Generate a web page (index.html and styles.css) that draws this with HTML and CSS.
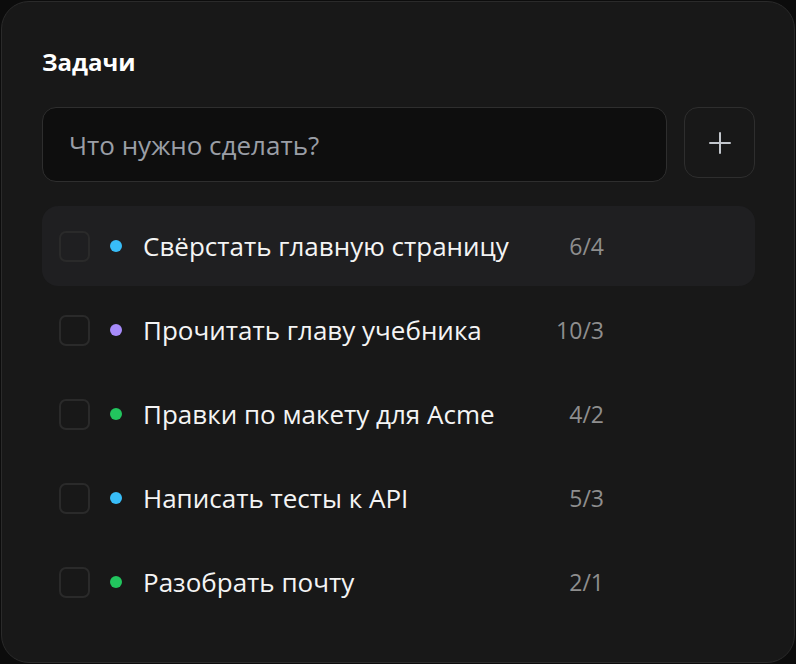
FILE: index.html
```html
<!DOCTYPE html>
<html lang="ru">
<head>
	<meta charset="UTF-8">
	<title>Задачи</title>
	<link rel="stylesheet" href="styles.css">
</head>
<body>
	<div class="card">
		<h2 class="title">Задачи</h2>
		<div class="add-row">
			<input class="task-input" type="text" placeholder="Что нужно сделать?">
			<button class="add-btn" type="button">
				<svg width="24" height="24" viewBox="0 0 24 24" fill="none" stroke="currentColor" stroke-width="2" stroke-linecap="round">
					<path d="M12 2v20M2 12h20"/>
				</svg>
			</button>
		</div>
		<ul class="tasks">
			<li class="task active">
				<span class="check"></span>
				<span class="dot blue"></span>
				<span class="name">Свёрстать главную страницу</span>
				<span class="count">6/4</span>
			</li>
			<li class="task">
				<span class="check"></span>
				<span class="dot purple"></span>
				<span class="name">Прочитать главу учебника</span>
				<span class="count">10/3</span>
			</li>
			<li class="task">
				<span class="check"></span>
				<span class="dot green"></span>
				<span class="name">Правки по макету для Acme</span>
				<span class="count">4/2</span>
			</li>
			<li class="task">
				<span class="check"></span>
				<span class="dot blue"></span>
				<span class="name">Написать тесты к API</span>
				<span class="count">5/3</span>
			</li>
			<li class="task">
				<span class="check"></span>
				<span class="dot green"></span>
				<span class="name">Разобрать почту</span>
				<span class="count">2/1</span>
			</li>
		</ul>
	</div>
</body>
</html>
```

FILE: styles.css
```css
*{
	margin: 0;
	padding: 0;
	box-sizing: border-box;
}
body{
	background-color: #0c0c0c;
	padding: 1px;
	font-family: "Open Sans", "Noto Sans", sans-serif;
	color: #f2f2f2;
}
.card{
	height: 662px;
	background-color: #181818;
	border: 1px solid #2a2a2a;
	border-radius: 28px;
	padding: 45px 39px 0 40px;
}
.title{
	font-size: 24px;
	font-weight: 700;
	line-height: 30px;
	color: #fff;
	margin-bottom: 30px;
}
.add-row{
	display: flex;
	gap: 17px;
	align-items: flex-start;
}
.task-input{
	flex: 1;
	height: 75px;
	background-color: #0e0e0e;
	border: 1px solid #2e2e2e;
	border-radius: 14px;
	padding: 0 26px;
	font-family: inherit;
	font-size: 26px;
	color: #eee;
	outline: none;
}
.task-input::placeholder{
	color: #9a9ea6;
}
.add-btn{
	width: 71px;
	height: 71px;
	background-color: #181818;
	border: 1px solid #2e2e2e;
	border-radius: 14px;
	color: #c2c6cc;
	display: flex;
	align-items: center;
	justify-content: center;
}
.tasks{
	list-style: none;
	margin-top: 24px;
	display: flex;
	flex-direction: column;
	gap: 4px;
}
.task{
	height: 80px;
	display: flex;
	align-items: center;
	padding: 0 151px 0 17px;
	border-radius: 16px;
}
.task.active{
	background-color: #1f1f21;
}
.check{
	width: 31px;
	height: 31px;
	border: 2px solid #2a2a2a;
	border-radius: 7px;
	flex-shrink: 0;
}
.dot{
	width: 12px;
	height: 12px;
	border-radius: 50%;
	margin: 0 21px 0 20px;
	flex-shrink: 0;
}
.dot.blue{
	background-color: #38bdf8;
}
.dot.purple{
	background-color: #a78bfa;
}
.dot.green{
	background-color: #22c55e;
}
.name{
	flex: 1;
	font-size: 26px;
	line-height: 34px;
	color: #f4f4f4;
	white-space: nowrap;
}
.count{
	font-size: 23px;
	line-height: 30px;
	color: #8e8e8e;
}
```
